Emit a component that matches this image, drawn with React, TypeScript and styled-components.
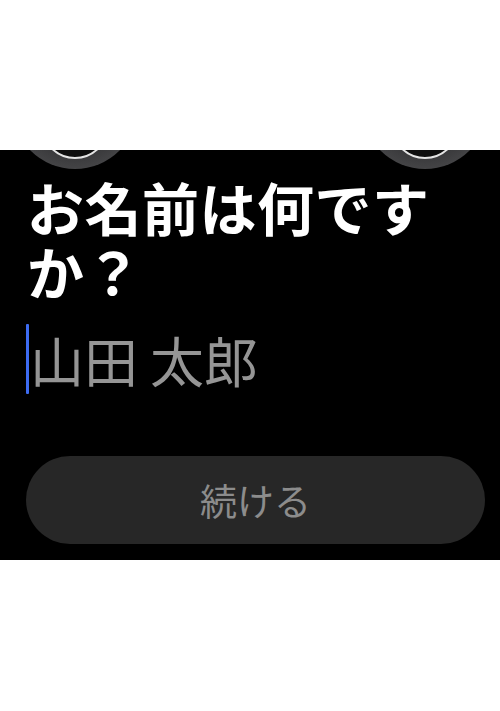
import React from 'react'
import styled, { createGlobalStyle } from 'styled-components'

const GlobalStyle = createGlobalStyle`
  html, body {
    margin: 0;
    padding: 0;
    background: #ffffff;
  }
  body {
    font-family: "Noto Sans CJK JP", "Noto Sans", sans-serif;
  }
`

const Page = styled.div`
  padding-top: 150px;
`

const Panel = styled.section`
  background: #000000;
  height: 410px;
  overflow: hidden;
  display: flex;
  flex-direction: column;
`

const TopBar = styled.div`
  display: flex;
  justify-content: space-between;
  padding: 0 12px;
  margin-top: -107px;
`

const RoundButton = styled.button`
  width: 126px;
  height: 126px;
  padding: 0;
  border: none;
  background: none;
  display: block;

  svg {
    display: block;
  }
`

const Title = styled.h1`
  margin: 5px 0 0;
  padding: 0 20px 0 27px;
  color: #ffffff;
  font-size: 57px;
  font-weight: 700;
  line-height: 64px;
  letter-spacing: 0.5px;
`

const Field = styled.label`
  display: flex;
  align-items: center;
  height: 70px;
  margin: 22px 0 0 26px;
`

const Caret = styled.span`
  width: 3px;
  height: 70px;
  background: #3d6cf2;
  border-radius: 1px;
  flex: none;
`

const NameInput = styled.input`
  flex: 1;
  min-width: 0;
  border: none;
  outline: none;
  background: transparent;
  padding: 0 0 0 1px;
  font-family: "Noto Sans CJK JP", "Noto Sans", sans-serif;
  font-size: 54px;
  font-weight: 400;
  color: #ffffff;
  caret-color: transparent;

  &::placeholder {
    color: #959595;
  }
`

const ContinueButton = styled.button`
  margin: 62px 15px 0 26px;
  height: 88px;
  border: none;
  border-radius: 44px;
  background: #272727;
  color: #8c8c8c;
  font-family: "Noto Sans CJK JP", "Noto Sans", sans-serif;
  font-size: 37px;
  font-weight: 400;
  display: flex;
  align-items: center;
  justify-content: center;
`

function CircleIcon() {
  return (
    <svg width="126" height="126" viewBox="0 0 126 126">
      <defs>
        <radialGradient id="rb" cx="50%" cy="50%" r="50%">
          <stop offset="80%" stopColor="#3a3a3c" />
          <stop offset="100%" stopColor="#444446" />
        </radialGradient>
      </defs>
      <circle cx="63" cy="63" r="63" fill="url(#rb)" />
      <circle cx="63" cy="82" r="33" fill="#0e0e0e" stroke="#e4e4e4" strokeWidth="2" />
    </svg>
  )
}

export default function App() {
  return (
    <>
      <GlobalStyle />
      <Page>
        <Panel>
          <TopBar>
            <RoundButton aria-label="戻る">
              <CircleIcon />
            </RoundButton>
            <RoundButton aria-label="メニュー">
              <CircleIcon />
            </RoundButton>
          </TopBar>
          <Title>お名前は何ですか？</Title>
          <Field>
            <Caret />
            <NameInput placeholder="山田 太郎" />
          </Field>
          <ContinueButton>続ける</ContinueButton>
        </Panel>
      </Page>
    </>
  )
}
